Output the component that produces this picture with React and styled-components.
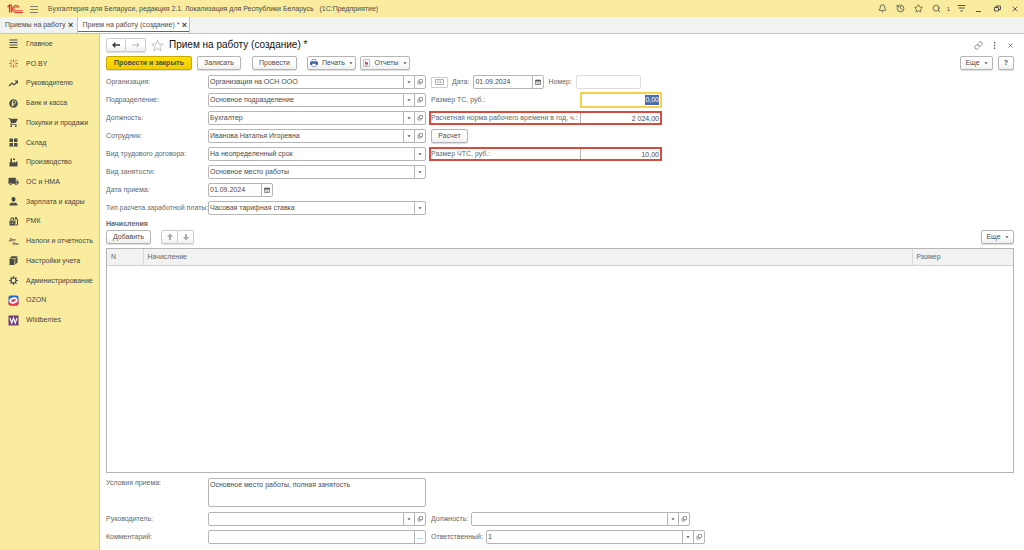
import React, { useId } from "react";
import styled, { createGlobalStyle, css } from "styled-components";
import { Bell, History, Star, Search, Link } from "lucide-react";
import { MdShoppingCart, MdLocalShipping } from "react-icons/md";

const color = {
  yellow: "#faec9e",
  text: "#4a4a4a",
  label: "#666",
  border: "#b5b5b5",
  red: "#dc4a3d",
};

const GlobalStyle = createGlobalStyle`
  * { box-sizing: border-box; }
  body { margin: 0; background: #fff; }
  body, button, input, select, textarea {
    font-family: "Liberation Sans", Arial, sans-serif;
    font-size: 7px;
    line-height: 10px;
    color: ${color.text};
  }
  button, input, select, textarea { margin: 0; padding: 0; }
  svg { display: block; flex: none; }
`;

const Window = styled.div`
  display: flex;
  flex-direction: column;
  min-height: 100vh;
`;

const TitleBar = styled.header`
  display: flex;
  align-items: center;
  height: 17px;
  padding: 0 0 0 7px;
  background: ${color.yellow};
`;

const AppTitle = styled.div`
  flex: 1;
  padding-left: 3px;
  white-space: pre;
`;

const IconButton = styled.button`
  display: flex;
  align-items: center;
  justify-content: center;
  width: ${(p) => p.$width || 18}px;
  height: 12px;
  border: 0;
  background: none;
  color: #444;
`;

const Count = styled.span`
  width: 7px;
  font-size: 6px;
  text-align: center;
`;

const Tabs = styled.nav`
  display: flex;
  height: 17px;
  background: #f1f2f2;
  border-bottom: 1px solid #c4c4c4;
`;

const Tab = styled.div`
  display: flex;
  align-items: center;
  gap: 2px;
  padding: 0 3px 0 5px;
  border-right: 1px solid #c4c4c4;
  ${(p) =>
    p.$active &&
    css`
      padding-right: 2px;
      background: #fff;
      box-shadow: inset 0 -1px #fff, inset 0 -2px #16945c;
    `}
`;

const TabLink = styled.a`
  color: ${color.text};
  text-decoration: none;
  white-space: nowrap;
`;

const TabClose = styled.button`
  width: 6px;
  border: 0;
  background: none;
  font-weight: bold;
  font-size: 9px;
  color: #444;
`;

const Body = styled.div`
  display: flex;
  flex: 1;
`;

const Sidebar = styled.nav`
  width: 100px;
  flex: none;
  background: ${color.yellow};
  border-right: 1px solid #dccf8c;
`;

const SectionList = styled.ul`
  display: grid;
  grid-auto-rows: 1fr;
  height: 296px;
  margin: 0;
  padding: 0;
  list-style: none;
`;

const SectionLink = styled.a`
  display: grid;
  grid-template-columns: 11px auto;
  align-items: center;
  gap: 7px;
  height: 100%;
  padding-left: 8px;
  color: #444;
  text-decoration: none;
  white-space: nowrap;
`;

const Page = styled.main`
  display: flex;
  flex-direction: column;
  flex: 1;
  min-width: 0;
  padding: 4px 10px 6px 6px;
`;

const Heading = styled.div`
  display: flex;
  align-items: center;
  height: 14px;
`;

const Title = styled.h1`
  flex: 1;
  margin: 0;
  font-size: 10px;
  line-height: 14px;
  font-weight: normal;
  color: #111;
`;

const Button = styled.button`
  display: flex;
  align-items: center;
  justify-content: center;
  gap: 4px;
  width: ${(p) => p.$width}px;
  height: 14px;
  border: 1px solid ${color.border};
  border-radius: 2px;
  background: linear-gradient(#fff 50%, #efefef);
  box-shadow: 0 1px 1px #ddd;
  white-space: nowrap;
  ${(p) =>
    p.$primary &&
    css`
      border-color: #c9a800;
      background: linear-gradient(#ffe000, #f3cd00);
      font-weight: bold;
    `}
`;

const ButtonPair = styled.div`
  display: flex;
  & > button { border-color: #ccc; }
  & > button + button { border-left: 0; border-radius: 0 2px 2px 0; }
  & > button:first-child { border-radius: 2px 0 0 2px; }
`;

const Toolbar = styled.div`
  display: flex;
  align-items: center;
  height: 14px;
  margin-top: ${(p) => p.$top}px;
`;

const Gap = styled.span`
  width: ${(p) => p.$size}px;
`;

const Spacer = styled.span`
  flex: 1;
`;

const Form = styled.form`
  display: grid;
  grid-template-columns: 320px 1fr;
  column-gap: 5px;
  row-gap: 4px;
  grid-auto-rows: 14px;
  margin-top: 5px;
`;

const FieldRow = styled.div`
  display: grid;
  grid-template-columns: 102px 1fr;
  align-items: center;
  grid-column: 1;
`;

const Label = styled.label`
  color: ${color.label};
  white-space: nowrap;
`;

const Inline = styled.div`
  display: flex;
  align-items: center;
  grid-column: 2;
  grid-row: ${(p) => p.$row};
  gap: ${(p) => p.$gap || 4}px;
`;

const Box = styled.div`
  display: flex;
  width: ${(p) => (p.$width ? p.$width + "px" : "100%")};
  height: 14px;
  border: 1px solid ${(p) => (p.$faint ? "#dedede" : color.border)};
  border-radius: 2px;
  background: #fff;
`;

const control = css`
  flex: 1;
  min-width: 0;
  width: 100%;
  border: 0;
  outline: 0;
  background: none;
  padding: 0 1px;
  appearance: none;
`;

const Input = styled.input`
  ${control}
`;

const Picker = styled.div`
  display: grid;
  flex: 1;
  & > * { grid-area: 1 / 1; }
`;

const Select = styled.select`
  ${control}
`;

const cell = css`
  display: flex;
  align-items: center;
  justify-content: center;
  width: 11px;
  border: 0;
  border-left: 1px solid ${color.border};
  background: none;
  color: #555;
`;

const Arrow = styled.span`
  ${cell}
  justify-self: end;
  pointer-events: none;
`;

const CellButton = styled.button`
  ${cell}
`;

const AmountRow = styled.div`
  display: flex;
  align-items: center;
  width: 233px;
  height: 14px;
  margin-left: -2px;
  padding-left: 2px;
  grid-column: 2;
  grid-row: ${(p) => p.$row};
  ${(p) =>
    p.$marked &&
    css`
      outline: 2px solid ${color.red};
      outline-offset: -2px;
    `}
`;

const AmountLabel = styled(Label)`
  width: 149px;
`;

const AmountInput = styled.input`
  flex: 1;
  min-width: 0;
  height: 14px;
  padding: 0 2px;
  border: 1px solid ${color.border};
  outline: 0;
  background: #fff;
  text-align: right;
`;

const FocusBox = styled.div`
  display: flex;
  align-items: center;
  flex: 1;
  justify-content: flex-end;
  height: 16px;
  padding: 0 1px;
  border: 2px solid #f6d24a;
`;

const FocusInput = styled.input`
  width: 14px;
  height: 10px;
  border: 0;
  outline: 0;
  background: #4a6ea9;
  color: #fff;
  text-align: right;
`;

const ListButton = styled.button`
  display: flex;
  align-items: center;
  justify-content: center;
  width: 17px;
  height: 11px;
  border: 1px solid #ccc;
  border-radius: 1px;
  background: #fff;
`;

const SectionTitle = styled.h2`
  margin: 4px 0 0;
  font-size: 7px;
  line-height: 10px;
  color: ${color.label};
`;

const TableFrame = styled.div`
  flex: 1;
  margin: 4px 0 5px;
  min-height: 60px;
  border: 1px solid ${color.border};
`;

const Table = styled.table`
  width: 100%;
  table-layout: fixed;
  border-collapse: collapse;
`;

const Th = styled.th`
  width: ${(p) => (p.$width ? p.$width + "px" : "auto")};
  height: 16px;
  padding: 0 4px;
  border-bottom: 1px solid #d2d2d2;
  border-right: ${(p) => (p.$last ? "0" : "1px solid #d8d8d8")};
  background: #f2f2f2;
  color: ${color.label};
  font-weight: normal;
  text-align: left;
`;

const Footer = styled.form`
  display: grid;
  grid-template-columns: 320px 1fr;
  column-gap: 5px;
  row-gap: 4px;
`;

const NoteRow = styled(FieldRow)`
  align-items: start;
  margin-bottom: 1px;
`;

const TextArea = styled.textarea`
  height: 29px;
  padding: 1px;
  border: 1px solid ${color.border};
  border-radius: 2px;
  outline: 0;
  resize: none;
`;

const Down = () => (
  <svg width="4" height="3" viewBox="0 0 5 3"><path d="M.5 0h4L2.5 2.5z" fill="#555" /></svg>
);

const OpenIcon = () => (
  <svg width="6" height="6" viewBox="0 0 12 12" fill="none" stroke="#666" strokeWidth="1.3">
    <path d="M5 1h6v6H5zM4 4H2v6h6V8" />
  </svg>
);

const CalendarIcon = () => (
  <svg width="6" height="6" viewBox="0 0 12 12" fill="none" stroke="#555" strokeWidth="1.3">
    <path d="M1 2h10v9H1z" /><path d="M1 3.5h10" strokeWidth="3" /><path d="M3 7h6M3 9h6" strokeWidth=".7" />
  </svg>
);

const Logo = () => (
  <svg width="16" height="10" viewBox="0 0 32 20" fill="none" stroke="#e0322c">
    <path d="M1 6l4-3.500v14.500M8.500 1.500v15.500" strokeWidth="2.400" />
    <path d="M4 2.200h5" strokeWidth="2" />
    <path d="M24 6.500a7 7 0 1 0-6.500 10.500h14" strokeWidth="2.200" />
    <path d="M21 8a3.800 3.800 0 1 0-3.500 5.500h14" strokeWidth="1.800" />
  </svg>
);

const MenuIcon = () => (
  <svg width="8" height="8" viewBox="0 0 8 8" stroke="#666"><path d="M0 1.500h8M0 4.500h8M0 7.500h8" strokeWidth=".8" /></svg>
);

const FilterIcon = () => (
  <svg width="9" height="9" viewBox="0 0 18 18" fill="none" stroke="#444" strokeWidth="1.800">
    <path d="M1 3h16M3 8h12" /><path d="M6 13h6l-3 3z" fill="#444" stroke="none" />
  </svg>
);

const MinIcon = () => <svg width="6" height="8" viewBox="0 0 6 8"><path d="M0 6.500h5" stroke="#555" /></svg>;
const RestoreIcon = () => (
  <svg width="7" height="7" viewBox="0 0 14 14" fill="none" stroke="#444" strokeWidth="1.800"><path d="M1 5h8v7H1zM4 5V2h9v7H9" /></svg>
);
const CloseIcon = ({ size = 6 }) => (
  <svg width={size} height={size} viewBox="0 0 10 10" stroke="#555" strokeWidth="1.500"><path d="M1 1l8 8M9 1L1 9" /></svg>
);
const DotsIcon = () => (
  <svg width="3" height="7" viewBox="0 0 3 7" fill="#555"><path d="M1 0h1.200v1.500H1zM1 2.700h1.200v1.500H1zM1 5.400h1.200v1.500H1z" /></svg>
);

const NavArrow = ({ forward }) => (
  <svg width="8" height="6" viewBox="0 0 16 12" fill="none" stroke={forward ? "#aaa" : "#333"} strokeWidth={forward ? 1.8 : 2.6}>
    <path d={forward ? "M0 6h14M9.500 1.500L14 6l-4.500 4.500" : "M16 6H2M6.500 1.500L2 6l4.500 4.500"} />
  </svg>
);

const FavoriteIcon = () => (
  <svg width="13" height="13" viewBox="0 0 26 26" fill="none" stroke="#b5b5b5" strokeWidth="1.600">
    <path d="M13 2l3 8.300h8.500l-6.800 5.200 2.600 8.300L13 18.700l-7.300 5.100 2.600-8.300-6.800-5.200H10z" />
  </svg>
);

const PrinterIcon = () => (
  <svg width="8" height="8" viewBox="0 0 16 16">
    <path d="M4 1h8v5H4z" fill="#fff" stroke="#46618c" />
    <rect x="0" y="5" width="16" height="7" rx="2" fill="#3c619f" />
    <path d="M4 9h8v6H4z" fill="#fff" stroke="#46618c" />
  </svg>
);

const ReportIcon = () => (
  <svg width="7" height="8" viewBox="0 0 14 16">
    <path d="M1 1h12v14H1z" fill="#fff" stroke="#888" />
    <path d="M4 5h3v6H4z" fill="#dd3b3b" /><path d="M7 7h3v4H7z" fill="#99404c" /><path d="M4 12.500h6" stroke="#4f8b56" />
  </svg>
);

const KeyboardIcon = () => (
  <svg width="9" height="6" viewBox="0 0 9 6" fill="none" stroke="#999" strokeWidth=".8">
    <path d="M.5.500h8v5h-8z" /><path d="M2 2h5M2 3.500h5" strokeDasharray="1 .5" />
  </svg>
);

const MoveArrow = ({ down }) => (
  <svg width="8" height="8" viewBox="0 0 8 8" fill="#aaa">
    <path d={down ? "M4 7.500L.8 4H3V1h2v3h2.200z" : "M4 .5L.8 4H3v3h2V4h2.200z"} />
  </svg>
);

const Glyph = ({ children }) => (
  <svg width="11" height="11" viewBox="0 0 22 22" fill="#4a4a4a">{children}</svg>
);

const sections = [
  ["Главное", <Glyph><path d="M3 3h16v2H3zM3 8h16v2H3zM3 13h16v2H3zM3 18h16v2H3z" /></Glyph>],
  ["PO.BY", <Glyph><path d="M11 8V3M11 14v5M8 9L4 5M14 9l4-4M8 13l-4 4M14 13l4 4M7 11H2M15 11h5" stroke="#df4634" strokeWidth="1.800" /><path d="M6 3l2 2M16 3l-2 2M6 19l2-2M16 19l-2-2" stroke="#df4634" strokeWidth="1.500" /></Glyph>],
  ["Руководителю", <Glyph><path d="M2 16l6-6 4 4 7-7" fill="none" stroke="#4a4a4a" strokeWidth="2.400" /><path d="M13 5h7v7z" /></Glyph>],
  ["Банк и касса", <Glyph><circle cx="11" cy="11" r="8.500" /><path d="M9 17V6h3.500a2.800 2.800 0 0 1 0 5.600H7M7 14h6" fill="none" stroke={color.yellow} strokeWidth="1.700" /></Glyph>],
  ["Покупки и продажи", <MdShoppingCart size={11} color="#4a4a4a" />],
  ["Склад", <Glyph><path d="M3 3h7v7H3zM12 3h7v7h-7zM3 12h7v6H3zM12 12h7v6h-7zM2 19h18v1H2z" /></Glyph>],
  ["Производство", <Glyph><path d="M3 19v-8l2-1V3h3v7l2 2 4-4v4l5-4v11z" /><path d="M10 3h4v3h-4z" /></Glyph>],
  ["ОС и НМА", <MdLocalShipping size={11} color="#4a4a4a" />],
  ["Зарплата и кадры", <Glyph><path d="M11 2a4 4 0 0 1 4 4.500c0 3-2 5-4 5s-4-2-4-5A4 4 0 0 1 11 2zM3 19c0-5 3-5 6-6l2 2 2-2c3 1 6 1 6 6z" /></Glyph>],
  ["РМК", <Glyph><path d="M3 9h12v10H3z" /><path d="M6 8V4h5v4M13 6h6v12h-3" fill="none" stroke="#4a4a4a" strokeWidth="2" /><path d="M5 12h8M5 15h8" stroke={color.yellow} strokeDasharray="2 1" /><path d="M14 2h4v3h-4z" /></Glyph>],
  ["Налоги и отчетность", <Glyph><text x="2" y="9" fontSize="8" fontStyle="italic" fontWeight="bold">Дт</text><text x="9" y="18" fontSize="8" fontStyle="italic" fontWeight="bold">Кт</text></Glyph>],
  ["Настройки учета", <Glyph><path d="M3 7h10v13H3z" /><path d="M4 6l3-3.500h12L15 6z" /><path d="M14.500 7v12l4.500-4V3z" /></Glyph>],
  ["Администрирование", <Glyph><circle cx="11" cy="11" r="5" fill="none" stroke="#4a4a4a" strokeWidth="2.400" /><path d="M11 2v4M11 16v4M2 11h4M16 11h4M5 5l2.500 2.500M14.500 14.500L17 17M5 17l2.500-2.500M14.500 7.500L17 5" stroke="#4a4a4a" strokeWidth="2.400" /></Glyph>],
  ["OZON", <Glyph><rect x="1" y="1" width="20" height="20" rx="4" fill="#2467d8" /><path d="M1 14c6 1 15-1 20-6v9a4 4 0 0 1-4 4H5a4 4 0 0 1-4-4z" fill="#ec3350" /><ellipse cx="11" cy="11" rx="8.500" ry="6" fill="#fff" transform="rotate(-15 11 11)" /><ellipse cx="11" cy="11" rx="5" ry="2.500" fill="#d9455f" transform="rotate(-15 11 11)" /></Glyph>],
  ["Wildberries", <Glyph><rect x="1" y="1" width="20" height="20" fill="#6c3f78" /><path d="M4 6l3.500 10L11 6l3.500 10L18 6" fill="none" stroke="#fff" strokeWidth="2.400" /></Glyph>],
];

function Choice({ id, value, open, width }) {
  return (
    <Box $width={width}>
      <Picker>
        <Select id={id} defaultValue={value}><option>{value}</option></Select>
        <Arrow><Down /></Arrow>
      </Picker>
      {open && <CellButton type="button" aria-label="Открыть"><OpenIcon /></CellButton>}
    </Box>
  );
}

function ChoiceRow({ label, value, open }) {
  const id = useId();
  return (
    <FieldRow>
      <Label htmlFor={id}>{label}</Label>
      <Choice id={id} value={value} open={open} />
    </FieldRow>
  );
}

function DateBox({ id, width }) {
  return (
    <Box $width={width}>
      <Input id={id} defaultValue="01.09.2024" />
      <CellButton type="button" aria-label="Календарь"><CalendarIcon /></CellButton>
    </Box>
  );
}

function MarkedAmount({ id, row, label, value }) {
  return (
    <AmountRow $row={row} $marked>
      <AmountLabel htmlFor={id}>{label}</AmountLabel>
      <AmountInput id={id} defaultValue={value} />
    </AmountRow>
  );
}

export default function App() {
  return (
    <Window>
      <GlobalStyle />
      <TitleBar>
        <Logo />
        <IconButton $width={22} aria-label="Меню"><MenuIcon /></IconButton>
        <AppTitle>Бухгалтерия для Беларуси, редакция 2.1. Локализация для Республики Беларусь   (1С:Предприятие)</AppTitle>
        <IconButton aria-label="Уведомления"><Bell size={9} /></IconButton>
        <IconButton aria-label="История"><History size={9} /></IconButton>
        <IconButton aria-label="Избранное"><Star size={9} /></IconButton>
        <IconButton aria-label="Поиск"><Search size={9} /></IconButton>
        <Count>1</Count>
        <IconButton aria-label="Настройки"><FilterIcon /></IconButton>
        <IconButton aria-label="Свернуть"><MinIcon /></IconButton>
        <IconButton aria-label="Восстановить"><RestoreIcon /></IconButton>
        <IconButton aria-label="Закрыть"><CloseIcon /></IconButton>
      </TitleBar>
      <Tabs>
        <Tab><TabLink href="#list">Приемы на работу</TabLink><TabClose aria-label="Закрыть вкладку">×</TabClose></Tab>
        <Tab $active><TabLink href="#new">Прием на работу (создание) *</TabLink><TabClose aria-label="Закрыть вкладку">×</TabClose></Tab>
      </Tabs>
      <Body>
        <Sidebar>
          <SectionList>
            {sections.map(([name, icon]) => (
              <li key={name}><SectionLink href="#section">{icon}{name}</SectionLink></li>
            ))}
          </SectionList>
        </Sidebar>
        <Page>
          <Heading>
            <ButtonPair>
              <Button $width={20} aria-label="Назад"><NavArrow /></Button>
              <Button $width={20} aria-label="Вперед"><NavArrow forward /></Button>
            </ButtonPair>
            <Gap $size={5} />
            <FavoriteIcon />
            <Gap $size={5} />
            <Title>Прием на работу (создание) *</Title>
            <IconButton $width={8} aria-label="Ссылка"><Link size={9} strokeWidth={1.5} /></IconButton>
            <IconButton $width={24} aria-label="Еще"><DotsIcon /></IconButton>
            <IconButton $width={8} aria-label="Закрыть"><CloseIcon size={5} /></IconButton>
          </Heading>
          <Toolbar $top={4}>
            <Button $width={86} $primary>Провести и закрыть</Button>
            <Gap $size={5} />
            <Button $width={44}>Записать</Button>
            <Gap $size={11} />
            <Button $width={45}>Провести</Button>
            <Gap $size={10} />
            <Button $width={49}><PrinterIcon />Печать <Down /></Button>
            <Gap $size={4} />
            <Button $width={50}><ReportIcon />Отчеты <Down /></Button>
            <Spacer />
            <Button $width={33}>Еще <Down /></Button>
            <Gap $size={5} />
            <Button $width={16}><b>?</b></Button>
          </Toolbar>

          <Form>
            <ChoiceRow label="Организация:" value="Организация на ОСН ООО" open />
            <ChoiceRow label="Подразделение:" value="Основное подразделение" open />
            <ChoiceRow label="Должность:" value="Бухгалтер" open />
            <ChoiceRow label="Сотрудник:" value="Иванова Наталья Игоревна" open />
            <ChoiceRow label="Вид трудового договора:" value="На неопределенный срок" />
            <ChoiceRow label="Вид занятости:" value="Основное место работы" />
            <FieldRow>
              <Label htmlFor="hired">Дата приема:</Label>
              <DateBox id="hired" width={65} />
            </FieldRow>
            <ChoiceRow label="Тип расчета заработной платы:" value="Часовая тарифная ставка" />

            <Inline $row={1}>
              <ListButton type="button" aria-label="Список"><KeyboardIcon /></ListButton>
              <Label htmlFor="date">Дата:</Label>
              <DateBox id="date" width={71} />
              <Label htmlFor="number">Номер:</Label>
              <Box $width={65} $faint><Input id="number" /></Box>
            </Inline>
            <AmountRow $row={2}>
              <AmountLabel htmlFor="rate">Размер ТС, руб.:</AmountLabel>
              <FocusBox><FocusInput id="rate" defaultValue="0,00" /></FocusBox>
            </AmountRow>
            <MarkedAmount id="norm" row={3} label="Расчетная норма рабочего времени в год, ч.:" value="2 024,00" />
            <Inline $row={4}><Button type="button" $width={37}>Расчет</Button></Inline>
            <MarkedAmount id="hourly" row={5} label="Размер ЧТС, руб.:" value="10,00" />
          </Form>

          <SectionTitle>Начисления</SectionTitle>
          <Toolbar $top={1}>
            <Button $width={45}>Добавить</Button>
            <Gap $size={10} />
            <ButtonPair>
              <Button $width={17} aria-label="Вверх"><MoveArrow /></Button>
              <Button $width={16} aria-label="Вниз"><MoveArrow down /></Button>
            </ButtonPair>
            <Spacer />
            <Button $width={33}>Еще <Down /></Button>
          </Toolbar>
          <TableFrame>
            <Table>
              <thead>
                <tr><Th $width={36}>N</Th><Th>Начисление</Th><Th $width={101} $last>Размер</Th></tr>
              </thead>
            </Table>
          </TableFrame>

          <Footer>
            <NoteRow>
              <Label htmlFor="terms">Условия приема:</Label>
              <TextArea id="terms" defaultValue="Основное место работы, полная занятость" />
            </NoteRow>
            <ChoiceRow label="Руководитель:" value="" open />
            <Inline $row={2} $gap={3}>
              <Label htmlFor="post">Должность:</Label>
              <Choice id="post" value="" open width={219} />
            </Inline>
            <FieldRow>
              <Label htmlFor="comment">Комментарий:</Label>
              <Box><Input id="comment" /><CellButton type="button" aria-label="Выбрать">...</CellButton></Box>
            </FieldRow>
            <Inline $row={3} $gap={3}>
              <Label htmlFor="owner">Ответственный:</Label>
              <Choice id="owner" value="1" open width={219} />
            </Inline>
          </Footer>
        </Page>
      </Body>
    </Window>
  );
}
